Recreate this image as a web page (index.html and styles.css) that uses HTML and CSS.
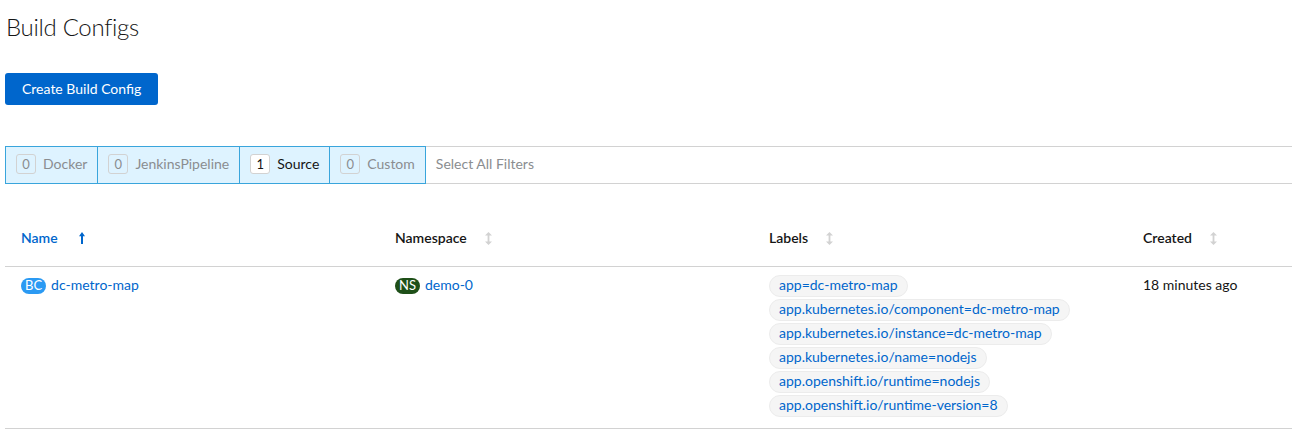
FILE: index.html
```html
<!DOCTYPE html>
<html lang="en">
<head>
<meta charset="utf-8">
<title>Build Configs</title>
<link rel="stylesheet" href="styles.css">
</head>
<body>
<div class="page">
  <h1 class="title">Build Configs</h1>
  <button class="btn-primary" type="button">Create Build Config</button>

  <div class="filters">
    <div class="filter"><span class="count">0</span><span class="filter-label">Docker</span></div>
    <div class="filter"><span class="count">0</span><span class="filter-label">JenkinsPipeline</span></div>
    <div class="filter filter-active"><span class="count">1</span><span class="filter-label">Source</span></div>
    <div class="filter"><span class="count">0</span><span class="filter-label">Custom</span></div>
    <div class="filter-rest"><span class="filter-label">Select All Filters</span></div>
  </div>

  <div class="table">
    <div class="thead">
      <div class="th th-sorted">Name
        <svg class="sort-icon sort-up" viewBox="0 0 6 12" width="6" height="12"><path d="M3 0 L6 4.2 H4 V12 H2 V4.2 H0 Z" fill="currentColor"/></svg>
      </div>
      <div class="th">Namespace
        <svg class="sort-icon" viewBox="0 0 7 13" width="7" height="13"><path d="M3.5 0 L7 3.6 H4.4 V9.4 H7 L3.5 13 L0 9.4 H2.6 V3.6 H0 Z" fill="currentColor"/></svg>
      </div>
      <div class="th">Labels
        <svg class="sort-icon" viewBox="0 0 7 13" width="7" height="13"><path d="M3.5 0 L7 3.6 H4.4 V9.4 H7 L3.5 13 L0 9.4 H2.6 V3.6 H0 Z" fill="currentColor"/></svg>
      </div>
      <div class="th">Created
        <svg class="sort-icon" viewBox="0 0 7 13" width="7" height="13"><path d="M3.5 0 L7 3.6 H4.4 V9.4 H7 L3.5 13 L0 9.4 H2.6 V3.6 H0 Z" fill="currentColor"/></svg>
      </div>
    </div>
    <div class="trow">
      <div class="td"><div class="res"><span class="res-badge res-bc">BC</span><a class="link" href="#">dc-metro-map</a></div></div>
      <div class="td"><div class="res"><span class="res-badge res-ns">NS</span><a class="link" href="#">demo-0</a></div></div>
      <div class="td">
        <div class="labels">
          <a class="label" href="#">app=dc-metro-map</a>
          <a class="label" href="#">app.kubernetes.io/component=dc-metro-map</a>
          <a class="label" href="#">app.kubernetes.io/instance=dc-metro-map</a>
          <a class="label" href="#">app.kubernetes.io/name=nodejs</a>
          <a class="label" href="#">app.openshift.io/runtime=nodejs</a>
          <a class="label" href="#">app.openshift.io/runtime-version=8</a>
        </div>
      </div>
      <div class="td"><div class="res"><span class="text-shift">18 minutes ago</span></div></div>
    </div>
  </div>
</div>
</body>
</html>
```

FILE: styles.css
```css
* { box-sizing: border-box; }

html, body {
  margin: 0;
  padding: 0;
  background: #fff;
}

body {
  font-family: "Lato", "Liberation Sans", sans-serif;
  font-size: 14px;
  color: #151515;
}

.page {
  padding-left: 5px;
}

.title {
  margin: 12px 0 0 1px;
  font-size: 24px;
  font-weight: 300;
  letter-spacing: -0.3px;
  line-height: 29px;
  color: #151515;
}

.btn-primary {
  display: flex;
  align-items: center;
  height: 32px;
  margin-top: 32px;
  padding: 0 17px 2px;
  border: none;
  border-radius: 3px;
  background: #0066cc;
  color: #fff;
  font-family: inherit;
  font-size: 14px;
}

.filters {
  display: flex;
  height: 38px;
  margin-top: 41px;
}

.filter {
  display: flex;
  align-items: center;
  gap: 7px;
  padding: 0 10px 2px;
  background: #def3ff;
  border: 1px solid #39a5dc;
  color: #8a8d90;
}

.filter + .filter {
  margin-left: -1px;
}

.filter-label {
  padding-bottom: 2px;
}

.count {
  display: flex;
  align-items: center;
  justify-content: center;
  width: 20px;
  height: 20px;
  padding-bottom: 1px;
  border: 1px solid #d2d2d2;
  border-radius: 3px;
  font-size: 13px;
  color: #8a8d90;
}

.filter-active {
  color: #151515;
}

.filter-active .count {
  background: #fff;
  color: #151515;
}

.filter-rest {
  flex: 1;
  display: flex;
  align-items: center;
  padding: 0 0 2px 10px;
  border-top: 1px solid #d2d2d2;
  border-bottom: 1px solid #d2d2d2;
  color: #8a8d90;
  font-size: 14px;
}

.table {
  margin-top: 26px;
}

.thead,
.trow {
  display: grid;
  grid-template-columns: 374px 374px 374px 1fr;
  border-bottom: 1px solid #d2d2d2;
}

.th {
  display: flex;
  align-items: center;
  padding: 18px 16px;
  line-height: 20px;
  font-weight: 600;
  font-size: 14px;
}

.th-sorted {
  color: #0066cc;
}

.sort-icon {
  margin-left: 18px;
  color: #d2d2d2;
}

.sort-up {
  margin-left: 21px;
  color: #0066cc;
}

.trow {
  padding: 8px 0 11px;
}

.td {
  padding: 0 16px;
}

.res {
  display: flex;
  align-items: center;
  height: 22px;
}

.link,
.text-shift {
  padding-bottom: 3px;
}

.res-badge {
  display: inline-flex;
  align-items: center;
  justify-content: center;
  height: 16px;
  min-width: 24px;
  padding: 0 4px 1px;
  margin-right: 5px;
  border-radius: 10px;
  color: #fff;
  font-size: 13px;
  line-height: 15px;
}

.res-bc {
  background: #2b9af3;
}

.res-ns {
  background: #1e4f18;
}

.link {
  color: #0066cc;
  text-decoration: none;
}

.labels {
  display: flex;
  flex-direction: column;
  align-items: flex-start;
  gap: 2px;
}

.label {
  display: inline-flex;
  align-items: center;
  height: 22px;
  padding: 0 9px 3px;
  border: 1px solid #ececec;
  border-radius: 12px;
  background: #f5f5f5;
  color: #0066cc;
  text-decoration: none;
}
```
